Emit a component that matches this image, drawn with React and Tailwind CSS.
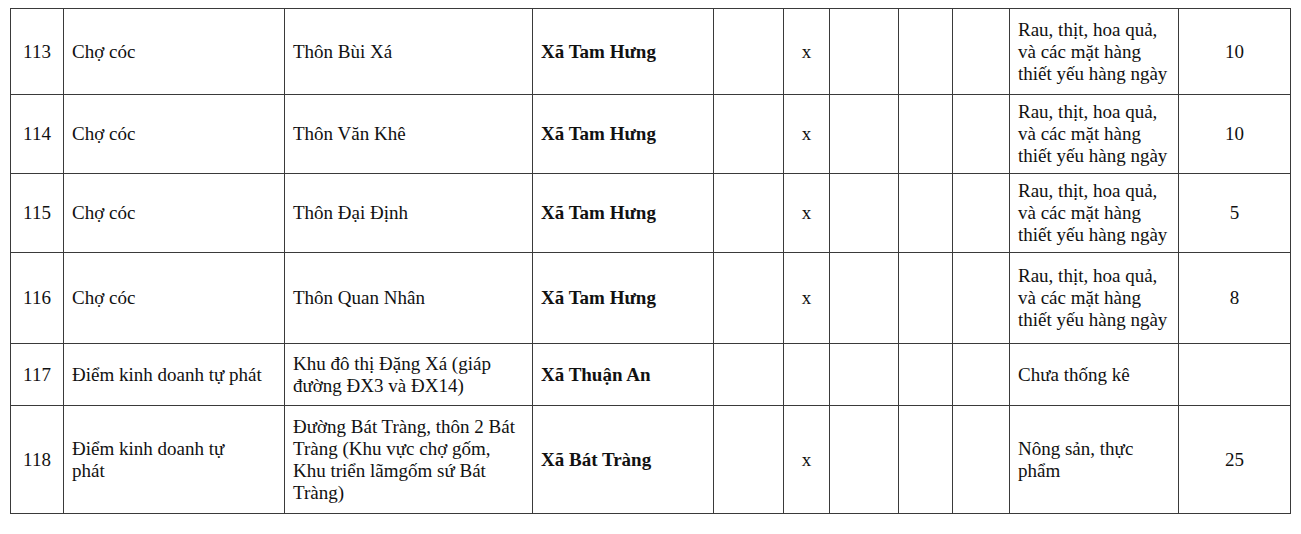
import React from 'react';

const COLS = [53, 221, 248, 181, 70, 46, 69, 54, 57, 169, 112];

const GOODS = 'Rau, thịt, hoa quả, và các mặt hàng thiết yếu hàng ngày';

const ROWS = [
    { no: '113', type: 'Chợ cóc', place: 'Thôn Bùi Xá', commune: 'Xã Tam Hưng', x: true, goods: GOODS, count: '10', h: 'h-[86px]' },
    { no: '114', type: 'Chợ cóc', place: 'Thôn Văn Khê', commune: 'Xã Tam Hưng', x: true, goods: GOODS, count: '10', h: 'h-[79px]' },
    { no: '115', type: 'Chợ cóc', place: 'Thôn Đại Định', commune: 'Xã Tam Hưng', x: true, goods: GOODS, count: '5', h: 'h-[79px]' },
    { no: '116', type: 'Chợ cóc', place: 'Thôn Quan Nhân', commune: 'Xã Tam Hưng', x: true, goods: GOODS, count: '8', h: 'h-[91px]' },
    { no: '117', type: 'Điểm kinh doanh tự phát', place: 'Khu đô thị Đặng Xá (giáp đường ĐX3 và ĐX14)', commune: 'Xã Thuận An', x: false, goods: 'Chưa thống kê', count: '', h: 'h-[62px]' },
    {
        no: '118',
        type: <>Điểm kinh doanh tự<br />phát</>,
        place: <>Đường Bát Tràng, thôn 2 Bát<br />Tràng (Khu vực chợ gốm,<br />Khu triển lãmgốm sứ Bát<br />Tràng)</>,
        commune: 'Xã Bát Tràng', x: true, goods: 'Nông sản, thực phẩm', count: '25', h: 'h-[108px]'
    },
];

const cell = 'border border-[#3a3a3a] align-middle px-[8px] py-0';

export default function App() {
    return (
        <div className="bg-white w-[1301px] h-[534px] pt-[8px] pl-[10px] font-['Liberation_Serif',serif] text-[19px] leading-[22px] text-[#111]">
            <table className="table-fixed border-collapse w-[1281px]">
                <colgroup>
                    {COLS.map((w, i) => <col key={i} style={{ width: w }} />)}
                </colgroup>
                <tbody>
                    {ROWS.map(r => (
                        <tr key={r.no} className={r.h}>
                            <td className={`${cell} text-center !px-0`}>{r.no}</td>
                            <td className={cell}>{r.type}</td>
                            <td className={cell}>{r.place}</td>
                            <td className={`${cell} font-bold`}>{r.commune}</td>
                            <td className={cell}></td>
                            <td className={`${cell} text-center !px-0`}>{r.x ? 'x' : ''}</td>
                            <td className={cell}></td>
                            <td className={cell}></td>
                            <td className={cell}></td>
                            <td className={cell}>{r.goods}</td>
                            <td className={`${cell} text-center`}>{r.count}</td>
                        </tr>
                    ))}
                </tbody>
            </table>
        </div>
    );
}
